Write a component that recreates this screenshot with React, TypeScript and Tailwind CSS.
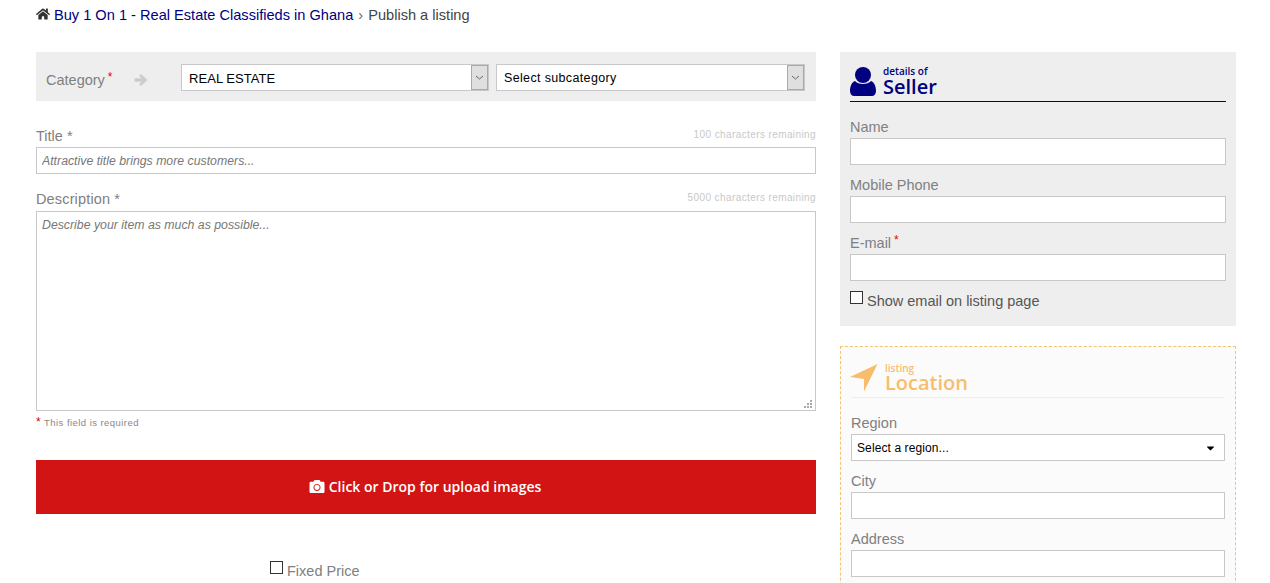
import React from "react";
import { FaHome, FaCamera, FaCaretDown } from "react-icons/fa";

const sans = "font-['Liberation_Sans',Arial,sans-serif]";
const open = "font-['Open_Sans',sans-serif]";

function Chevron() {
  return (
    <span className="flex h-[25px] w-[17px] items-center justify-center border border-[#a9a9a9] bg-[#dfdfdf]">
      <svg width="9" height="5" viewBox="0 0 9 5" fill="none">
        <path d="M1 1l3.5 3L8 1" stroke="#666" strokeWidth="1" />
      </svg>
    </span>
  );
}

function FakeSelect({ text, w, small }: { text: string; w: string; small?: boolean }) {
  return (
    <div className={`flex h-[27px] items-center justify-between border border-[#c8c8c8] bg-white pl-[7px] pr-0 ${w}`}>
      <span className={`relative top-[1px] text-black ${small ? "text-[12.5px] tracking-[0.35px]" : "text-[13px] tracking-[0.05px]"}`}>{text}</span>
      <Chevron />
    </div>
  );
}

function Star() {
  return <span className="relative -top-[4px] ml-[3px] text-[12px] leading-none text-[#f00000]">*</span>;
}

function Field({ label, star }: { label: string; star?: boolean }) {
  return (
    <div className="mt-[11px]">
      <div className="mb-[2px] h-[18px] text-[14.5px] leading-[18px] text-[#808080]">
        {label}
        {star && <Star />}
      </div>
      <input className="block h-[27px] w-full border border-[#c8c8c8] bg-white outline-none" />
    </div>
  );
}

export default function App() {
  return (
    <div className={`h-[583px] w-full overflow-hidden bg-white pl-[36px] ${sans}`}>
      <div className="flex h-[52px] items-start pt-[6px] text-[14.6px] leading-[18px] text-[#444]">
        <FaHome className="mr-[4px] mt-[1px] h-[14px] w-[14px] text-[#333]" />
        <a className="text-[#000080]">Buy 1 On 1 - Real Estate Classifieds in Ghana</a>
        <span className="mx-[5px] text-[#666]">›</span>
        <span>Publish a listing</span>
      </div>

      <div className="flex gap-[24px]">
        <div className="w-[780px]">
          <div className="flex h-[49px] items-center bg-[#eeeeee] pl-[10px]">
            <div className="relative top-[4px] w-[88px] text-[14.5px] text-[#808080]">
              Category
              <Star />
            </div>
            <svg className="relative top-[3px]" width="14" height="14" viewBox="0 0 14 14" fill="#cccccc">
              <path d="M7 1L13.5 7L7 13L5 11L7.5 8.7H0.5V5.3H7.5L5 3Z" />
            </svg>
            <div className="relative top-[1px] ml-[33px] flex gap-[7px]">
              <FakeSelect text="REAL ESTATE" w="w-[308px]" />
              <FakeSelect text="Select subcategory" w="w-[309px]" small />
            </div>
          </div>

          <div className="mt-[27px] flex h-[18px] items-center justify-between">
            <span className="text-[14.5px] text-[#808080]">Title *</span>
            <span className="relative -top-[3px] text-[10px] tracking-[0.4px] text-[#c8c8c8]">100 characters remaining</span>
          </div>
          <input
            placeholder="Attractive title brings more customers..."
            className="mt-[1px] block h-[27px] w-full border border-[#c8c8c8] bg-white px-[5px] text-[12.3px] italic outline-none placeholder:text-[#777]"
          />

          <div className="mt-[17px] flex h-[18px] items-center justify-between">
            <span className="text-[14.5px] tracking-[0.15px] text-[#808080]">Description *</span>
            <span className="relative -top-[3px] text-[10px] tracking-[0.4px] text-[#c8c8c8]">5000 characters remaining</span>
          </div>
          <div className="relative mt-[2px] h-[200px]">
            <textarea
              placeholder="Describe your item as much as possible..."
              className="block h-full w-full resize-none border border-[#c8c8c8] bg-white px-[5px] py-[4px] text-[12.3px] italic outline-none placeholder:text-[#777]"
            />
            <svg className="absolute bottom-[2px] right-[3px]" width="9" height="9" viewBox="0 0 9 9" fill="#aaa">
              <rect x="6" y="0" width="2" height="2" />
              <rect x="3" y="3" width="2" height="2" />
              <rect x="6" y="3" width="2" height="2" />
              <rect x="0" y="6" width="2" height="2" />
              <rect x="3" y="6" width="2" height="2" />
              <rect x="6" y="6" width="2" height="2" />
            </svg>
          </div>

          <div className="mt-[5px] h-[14px] text-[9.5px] leading-[14px] tracking-[0.45px] text-[#888]">
            <span className="text-[12px] leading-none text-[#d00]">*</span> This field is required
          </div>

          <div className={`mt-[30px] flex h-[54px] items-center justify-center gap-[4px] bg-[#d21414] pb-[2px] pr-[2px] text-[14px] font-semibold text-white ${open}`}>
            <FaCamera className="h-[15px] w-[16px]" />
            <span>Click or Drop for upload images</span>
          </div>

          <div className="ml-[234px] mt-[46px] flex items-start">
            <span className="mr-[4px] mt-[1px] h-[13px] w-[13px] border border-[#333] bg-white" />
            <span className="mt-[1px] text-[14.5px] leading-[20px] text-[#808080]">Fixed Price</span>
          </div>
        </div>

        <div className="w-[396px]">
          <div className="h-[274px] bg-[#eeeeee] px-[10px] pt-[13px]">
            <div className="flex h-[37px] items-start border-b border-[#000080]">
              <svg className="mt-[2px]" width="26" height="29" viewBox="0 0 26 29" fill="#000080">
                <circle cx="13" cy="8" r="8" />
                <path d="M5 14C8 18 18 18 21 14C24 15 26 19 26 24C26 27 24 29 22 29H4C2 29 0 27 0 24C0 19 2 15 5 14Z" />
              </svg>
              <div className={`ml-[7px] pt-[1px] text-[#000080] ${open}`}>
                <div className="text-[10px] font-semibold leading-[11px]">details of</div>
                <div className="text-[20px] font-semibold leading-[20px]">Seller</div>
              </div>
            </div>
            <div className="pt-[5px]">
              <Field label="Name" />
              <Field label="Mobile Phone" />
              <Field label="E-mail" star />
            </div>
            <div className="mt-[10px] flex items-start">
              <span className="h-[13px] w-[13px] border border-[#333] bg-white" />
              <span className="ml-[4px] mt-[1px] text-[14.5px] leading-[18px] text-[#555]">Show email on listing page</span>
            </div>
          </div>

          <div className="mt-[20px] h-[300px] border border-dashed border-[#f5c272] bg-[#fbfbfb] px-[10px] pt-[16px]">
            <div className="flex h-[35px] items-start border-b border-[#eeeeee]">
              <svg className="-ml-[1px] mt-[1px]" width="28" height="28" viewBox="0 0 28 28" fill="#f7bd6d">
                <path d="M27.5 0L0 13L14 15V27.5Z" />
              </svg>
              <div className={`ml-[7px] text-[#f7bd6d] ${open}`}>
                <div className="text-[10px] font-semibold leading-[11px]">listing</div>
                <div className="-mt-[1px] text-[20px] font-semibold leading-[20px]">Location</div>
              </div>
            </div>
            <div className="mt-[16px]">
              <div className="mb-[2px] h-[18px] text-[14.5px] leading-[18px] text-[#808080]">Region</div>
              <div className="flex h-[27px] items-center justify-between border border-[#c8c8c8] bg-white pl-[5px] pr-[9px]">
                <span className="text-[12px] tracking-[0.1px] text-black">Select a region...</span>
                <FaCaretDown className="h-[12px] w-[9px] text-black" />
              </div>
            </div>
            <Field label="City" />
            <Field label="Address" />
          </div>
        </div>
      </div>
    </div>
  );
}
